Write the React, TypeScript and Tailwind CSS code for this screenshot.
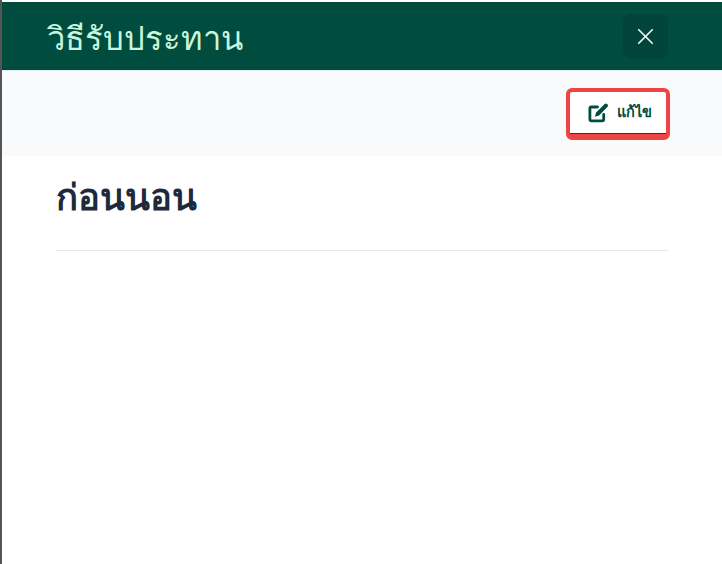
import React from 'react';
import { X } from 'lucide-react';

const EditIcon = () => (
  <svg width="20" height="20" viewBox="0 0 20 20" fill="none" className="shrink-0 text-[#004d40]">
    <path d="M9.5 4H3.5a1.6 1.6 0 0 0-1.6 1.6v10.6a1.6 1.6 0 0 0 1.6 1.6h10.6a1.6 1.6 0 0 0 1.6-1.6V11.5" stroke="currentColor" strokeWidth="2.8" strokeLinecap="round" />
    <path d="M16.4 1.2a2 2 0 0 1 2.9 2.9l-8.2 8.4-4.2 1.2 1.2-4.2z" fill="currentColor" />
  </svg>
);

const App: React.FC = () => {
  return (
    <div className="relative h-[564px] w-[722px] overflow-hidden bg-white pl-[2px] pt-[2px] font-['Liberation_Sans',sans-serif]">
      <div className="absolute left-0 top-0 h-full w-[2px] bg-[#555555]" />
      <header className="flex h-[68px] items-center justify-between bg-[#004d40] pl-[45px] pr-[54px]">
        <h1 className="mt-[6px] text-[32.65px] leading-none text-[#c8f5dc]">วิธีรับประทาน</h1>
        <button className="flex h-[45px] w-[45px] items-center justify-center rounded-lg bg-[#00443a] text-[#eef7f4]">
          <X size={27} strokeWidth={1.5} />
        </button>
      </header>
      <div className="flex h-[86px] items-center justify-end border-t border-[#e2e8f0] bg-[#f8fafc] pr-[52px]">
        <button className="flex h-[52px] w-[104px] items-center justify-center gap-[9px] rounded-md border-x-[4px] border-b-[6px] border-t-[4px] border-[#ef4444] bg-white pl-[3px] text-[#004d40] shadow-[inset_0_-1px_0_#004d40]">
          <EditIcon />
          <span className="text-[14.5px] font-bold leading-none">แก้ไข</span>
        </button>
      </div>
      <main className="px-[54px]">
        <div className="border-b border-[#e2e8f0] pb-[30px] pt-[20px]">
          <h2 className="text-[36.4px] font-bold leading-[44px] text-[#1e293b]">ก่อนนอน</h2>
        </div>
      </main>
    </div>
  );
};

export default App;
